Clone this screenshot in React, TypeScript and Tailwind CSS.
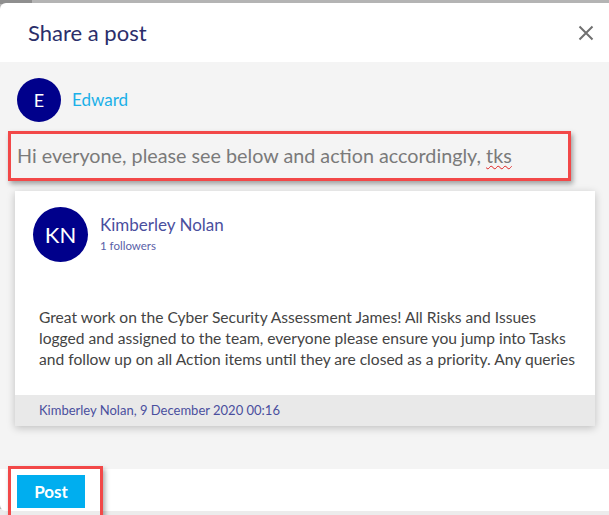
import React from "react";

const Avatar = ({ initials, size }: { initials: string; size: string }) => (
  <div
    className={`${size} rounded-full bg-[#00008b] text-white flex items-center justify-center shrink-0`}
  >
    {initials}
  </div>
);

const App = () => {
  return (
    <div className="w-[609px] h-[515px] overflow-hidden bg-[#b4b4b4] font-['Lato','Open_Sans',sans-serif] relative">
      <div className="absolute left-0 top-0 w-[32px] h-[4px] bg-[#8f8f8f]" />
      <div className="absolute left-0 bottom-0 w-full h-[6px] bg-[#ececec]" />

      {/* modal */}
      <div className="relative mt-[3px] h-[508px] bg-white rounded-tl-[6px] rounded-bl-[6px] flex flex-col">
        <div className="h-[59px] shrink-0 flex items-center justify-between pl-[28px] pr-[15px]">
          <h2 className="text-[22px] text-[#2b2e6a] leading-none pt-[1px]">Share a post</h2>
          <svg width="16" height="16" viewBox="0 0 16 16">
            <path d="M1.5 1.5 L14.5 14.5 M14.5 1.5 L1.5 14.5" stroke="#707070" strokeWidth="2" />
          </svg>
        </div>

        <div className="bg-[#f4f4f4] h-[407px] shrink-0 flex flex-col">
          <div className="flex items-center gap-[11px] pl-[17px] pt-[16px]">
            <Avatar initials="E" size="w-[44px] h-[44px] text-[18px]" />
            <span className="text-[17px] text-[#1ab0e8]">Edward</span>
          </div>

          <div className="mt-[9px] ml-[8px] w-[563px] h-[50px] border-[3px] border-[#f24848] shadow-[2px_3px_5px_rgba(0,0,0,0.35)] flex items-center pl-[6px]">
            <span className="text-[19.75px] text-[#7a7a7a]">
              Hi everyone, please see below and action accordingly,{" "}
              <span className="underline decoration-wavy decoration-[#e02020] decoration-1 underline-offset-2">
                tks
              </span>
            </span>
          </div>

          <div className="mt-[10px] ml-[15px] w-[580px] bg-white shadow-[0_2px_8px_rgba(0,0,0,0.22)]">
            <div className="flex items-start pt-[16px] pl-[18px]">
              <Avatar initials="KN" size="w-[55px] h-[55px] text-[22px]" />
              <div className="ml-[12px] pt-[7px] flex flex-col">
                <span className="text-[17px] leading-[22px] text-[#4a4f9e]">Kimberley Nolan</span>
                <span className="text-[11.5px] leading-[16px] mt-[2px] text-[#5a5fa8]">1 followers</span>
              </div>
            </div>
            <p className="mt-[45px] pl-[24px] pr-[18px] pb-[25px] text-[15.6px] leading-[21px] text-[#444]">
              Great work on the Cyber Security Assessment James! All Risks and Issues logged and
              assigned to the team, everyone please ensure you jump into Tasks and follow up on all
              Action items until they are closed as a priority. Any queries
            </p>
            <div className="h-[31px] bg-[#e9e9e9] flex items-center pl-[24px] text-[13px] text-[#4a4f9e]">
              Kimberley Nolan, 9 December 2020 00:16
            </div>
          </div>
        </div>

        <div className="flex-1 pl-[17px] pt-[6px]">
          <button className="w-[68px] h-[33px] bg-[#00aeef] text-white font-bold text-[17px]">
            Post
          </button>
        </div>
      </div>

      <div className="absolute left-[8px] top-[466px] w-[95px] h-[52px] border-[3px] border-[#f24848] shadow-[2px_3px_5px_rgba(0,0,0,0.35)]" />
    </div>
  );
};

export default App;
